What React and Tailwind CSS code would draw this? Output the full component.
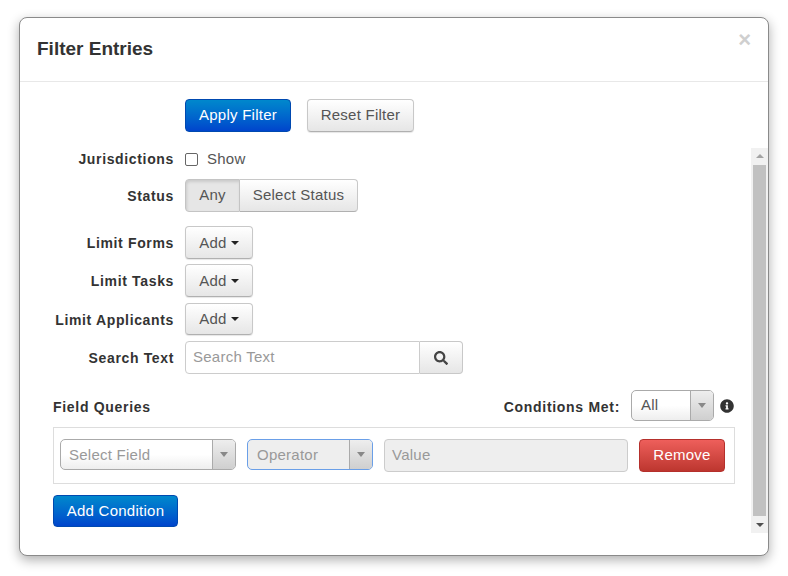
import { FaInfoCircle, FaSearch } from 'react-icons/fa';

const grayBtn = 'border border-[#c8c8c8] border-b-[#b0b0b0] rounded-[4px] bg-gradient-to-b from-white to-[#e6e6e6] text-[#555] shadow-[0_1px_1px_rgba(0,0,0,0.1)]';
const blueBtn = 'rounded-[4px] border border-[#0049b0] bg-gradient-to-b from-[#0088cc] to-[#0044cc] text-white font-[500]';
const bodyText = 'text-[15px] tracking-[0.25px]';

function Row({ label, className = '', labelClass = 'pt-[2px]', children }) {
  return (
    <div className={`flex items-center ${className}`}>
      <div className={`w-[154px] shrink-0 text-right text-[14px] font-bold tracking-[0.65px] text-[#333] ${labelClass}`}>{label}</div>
      <div className="ml-[11px] flex items-center">{children}</div>
    </div>
  );
}

function AddDropdown({ className = 'h-[33px] pt-[2px]' }) {
  return (
    <button type="button" className={`flex w-[68px] items-center justify-center gap-[4px] ${bodyText} ${className} ${grayBtn}`}>
      Add
      <span className="mt-[-1px] h-0 w-0 border-x-[4px] border-t-[4px] border-x-transparent border-t-[#222]" />
    </button>
  );
}

function SelectBox({ text, className = '', textClass = 'pl-[8px] pt-[2px] text-[#999]' }) {
  return (
    <div className={`flex items-stretch overflow-hidden rounded-[5px] border ${className}`}>
      <div className={`flex flex-1 items-center ${bodyText} ${textClass}`}>{text}</div>
      <div className="flex w-[23px] items-center justify-center border-l border-[#aaa] bg-gradient-to-b from-[#eeeeee] to-[#cfcfcf]">
        <span className="h-0 w-0 border-x-[4.5px] border-t-[5px] border-x-transparent border-t-[#888]" />
      </div>
    </div>
  );
}

export default function App() {
  return (
    <div className="h-[576px] w-[788px] overflow-hidden bg-white pl-[19px] pt-[17px] font-['Liberation_Sans',Arial,sans-serif]">
      <div className="flex h-[539px] w-[750px] flex-col rounded-[8px] border border-[#8a8a8a] bg-white shadow-[0_4px_12px_rgba(0,0,0,0.32)]">
        <header className="flex h-[64px] shrink-0 justify-between border-b border-[#e8e8e8] pl-[17px] pr-[17px]">
          <h3 className="mt-[19px] text-[19px] leading-[24px] font-bold text-[#333]">Filter Entries</h3>
          <span className="mt-[11px] text-[22px] leading-[22px] font-bold text-[#cfcfcf]">×</span>
        </header>

        <div className="flex min-h-0 flex-1">
          <div className="w-[731px] shrink-0 pt-[17px]">
            <div className="ml-[165px] flex gap-[16px]">
              <button type="button" className={`h-[33px] w-[106px] ${bodyText} ${blueBtn}`}>Apply Filter</button>
              <button type="button" className={`h-[33px] w-[107px] ${bodyText} ${grayBtn}`}>Reset Filter</button>
            </div>

            <Row label="Jurisdictions" labelClass="" className="mt-[17px] h-[20px]">
              <span className="h-[13px] w-[13px] rounded-[2px] border border-[#666] bg-white" />
              <span className={`ml-[9px] text-[#555] ${bodyText}`}>Show</span>
            </Row>

            <Row label="Status" className="mt-[10px] h-[33px]">
              <div className="flex h-[33px]">
                <button type="button" className={`w-[55px] rounded-l-[4px] border border-[#c4c4c4] bg-[#e6e6e6] text-[#555] shadow-[inset_1px_2px_3px_rgba(0,0,0,0.12)] ${bodyText}`}>Any</button>
                <button type="button" className={`w-[118px] rounded-r-[4px] border border-l-0 border-[#c8c8c8] border-b-[#b0b0b0] bg-gradient-to-b from-white to-[#e6e6e6] text-[#555] ${bodyText}`}>Select Status</button>
              </div>
            </Row>

            <Row label="Limit Forms" className="mt-[14px] h-[33px]"><AddDropdown /></Row>
            <Row label="Limit Tasks" className="mt-[5px] h-[33px]"><AddDropdown /></Row>
            <Row label="Limit Applicants" className="mt-[6px] h-[32px]"><AddDropdown className="h-[32px]" /></Row>

            <Row label="Search Text" className="mt-[6px] h-[33px]">
              <div className={`flex h-[33px] w-[235px] items-center rounded-l-[4px] border border-[#cccccc] pl-[7px] text-[#999] ${bodyText}`}>Search Text</div>
              <button type="button" className="flex h-[33px] w-[43px] items-center justify-center rounded-r-[4px] border border-l-0 border-[#c8c8c8] bg-gradient-to-b from-white to-[#e6e6e6]">
                <FaSearch size={14} className="text-[#444]" />
              </button>
            </Row>

            <div className="ml-[33px] mt-[16px] flex h-[31px] w-[682px] items-center">
              <span className="mt-[3px] text-[14px] font-bold tracking-[0.7px] text-[#333]">Field Queries</span>
              <span className="ml-auto mt-[3px] text-[14px] font-bold tracking-[0.7px] text-[#333]">Conditions Met:</span>
              <SelectBox text="All" textClass="pl-[9px] text-[#555]" className="ml-[11px] h-[31px] w-[83px] border-[#aaa] bg-gradient-to-b from-white from-50% to-[#eeeeee]" />
              <FaInfoCircle size={14} className="ml-[6px] mr-[1px] mt-[1px] text-[#333]" />
            </div>

            <div className="ml-[33px] mt-[6px] flex h-[57px] w-[682px] items-start border border-[#dddddd] pl-[6px] pt-[11px]">
              <SelectBox text="Select Field" className="h-[31px] w-[176px] border-[#aaa] bg-gradient-to-b from-white from-50% to-[#eeeeee]" />
              <SelectBox text="Operator" textClass="pl-[9px] pt-[2px] text-[#999]" className="ml-[11px] h-[31px] w-[126px] border-[#6a9fe8] bg-[#eeeeee]" />
              <div className={`ml-[11px] flex h-[33px] w-[244px] items-center rounded-[4px] border border-[#cccccc] bg-[#eeeeee] pl-[7px] text-[#999] ${bodyText}`}>Value</div>
              <button type="button" className={`ml-[11px] h-[33px] w-[86px] rounded-[4px] border border-[#b5302c] bg-gradient-to-b from-[#ee5f5b] to-[#bd362f] text-white ${bodyText}`}>Remove</button>
            </div>

            <button type="button" className={`ml-[33px] mt-[11px] h-[32px] w-[125px] ${bodyText} ${blueBtn}`}>Add Condition</button>
          </div>

          <div className="mb-[22px] mt-[66px] flex w-[17px] shrink-0 flex-col items-center bg-[#f1f1f1]">
            <span className="mt-[6px] h-0 w-0 border-x-[4px] border-b-[4px] border-x-transparent border-b-[#a3a3a3]" />
            <div className="mt-[7px] w-[13px] flex-1 bg-[#c1c1c1]" />
            <span className="mb-[6px] mt-[7px] h-0 w-0 border-x-[4px] border-t-[4px] border-x-transparent border-t-[#505050]" />
          </div>
        </div>
      </div>
    </div>
  );
}
